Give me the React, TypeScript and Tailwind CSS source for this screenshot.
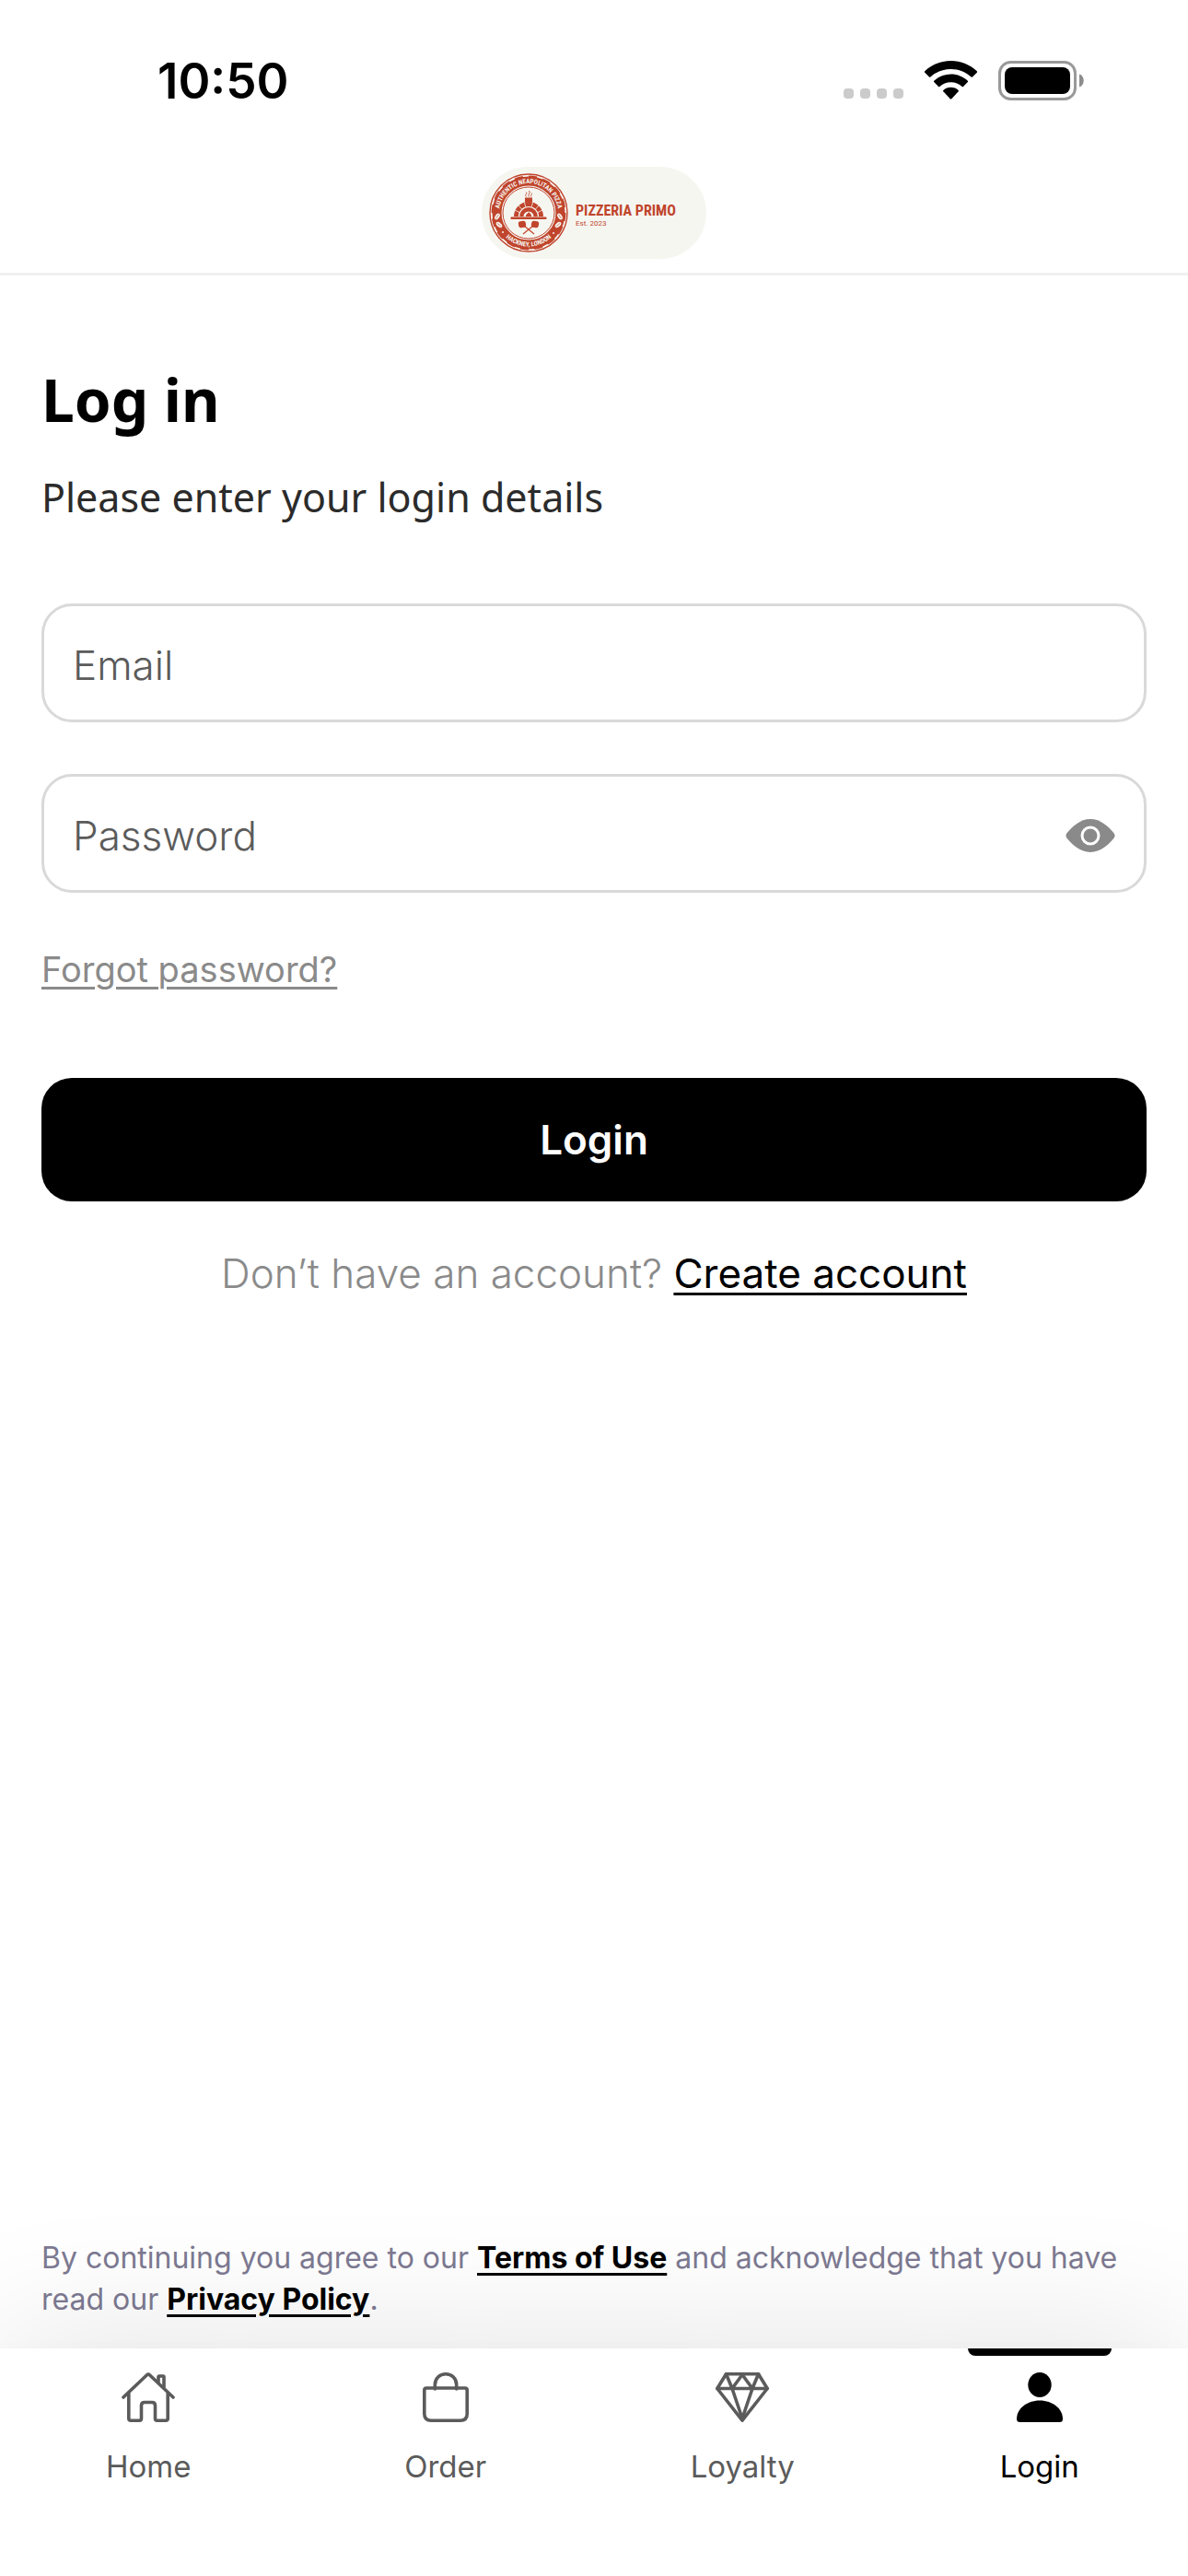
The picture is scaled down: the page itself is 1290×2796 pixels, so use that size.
import { useState } from 'react';
import type { ReactNode } from 'react';

const BRAND = '#c0452c';

function StatusBar() {
  return (
    <div className="flex h-[174px] items-center justify-between pr-[113px] pl-[171px]">
      <time className="pt-[2px] text-[53px] leading-none font-semibold text-black">10:50</time>
      <div className="flex items-end gap-[23px]">
        <div className="flex gap-[7px] pb-[2px]" aria-hidden="true">
          <span className="size-[11px] rounded-[4px] bg-[#cbcbcb]" />
          <span className="size-[11px] rounded-[4px] bg-[#cbcbcb]" />
          <span className="size-[11px] rounded-[4px] bg-[#cbcbcb]" />
          <span className="size-[11px] rounded-[4px] bg-[#cbcbcb]" />
        </div>
        <svg width="57" height="42" viewBox="0 0 57 42" className="mb-px" role="img" aria-label="Wi-Fi">
          <path d="M28.5 0C39.500 0 49.500 4.300 56.800 11.300Q57.400 12 56.800 12.700L52 17.600Q51.300 18.100 50.600 17.600C44.800 12.200 37 8.900 28.500 8.900S12.200 12.200 6.400 17.600Q5.700 18.100 5 17.600L0.200 12.700Q-0.400 12 0.200 11.300C7.500 4.300 17.500 0 28.500 0Z" />
          <path d="M28.500 14.500C35.600 14.500 42 17.200 46.800 21.700Q47.500 22.300 46.800 23L42 27.900Q41.300 28.500 40.600 27.900C37.400 24.900 33.200 23.200 28.500 23.200S19.600 24.900 16.400 27.900Q15.700 28.500 15 27.900L10.200 23Q9.500 22.300 10.200 21.700C15 17.200 21.400 14.500 28.500 14.500Z" />
          <path d="M28.500 28.800C31.600 28.800 34.500 29.900 36.700 31.900Q37.300 32.500 36.700 33.200L29.300 41.200Q28.500 41.900 27.700 41.200L20.300 33.200Q19.700 32.500 20.300 31.900C22.500 29.900 25.400 28.800 28.500 28.800Z" />
        </svg>
        <svg width="93" height="43" viewBox="0 0 93 43" role="img" aria-label="Battery full">
          <rect x="1.500" y="1.500" width="82" height="40" rx="12" fill="none" stroke="#999" strokeWidth="3" />
          <rect x="7" y="7" width="71" height="29" rx="8" />
          <path d="M88 14.500C94.300 16.500 94.300 26.500 88 28.500Z" fill="#8c8c8c" />
        </svg>
      </div>
    </div>
  );
}

function Leaf({ x, y, r }: { x: number; y: number; r: number }) {
  return (
    <g transform={`translate(${x} ${y}) rotate(${r})`}>
      <ellipse rx="2.200" ry="3.800" fill="#f6f6f1" />
      <path d="M0 -2.500V2.500" stroke={BRAND} strokeWidth="0.600" />
    </g>
  );
}

function Logo() {
  return (
    <div className="flex h-[100px] w-[244px] items-center rounded-full bg-[#f6f6f1] pl-2">
      <svg width="86" height="86" viewBox="-43 -43 86 86" aria-hidden="true">
        <defs>
          <path id="seal-top" d="M-32 0A32 32 0 0 1 32 0" />
          <path id="seal-bottom" d="M-36.500 0A36.500 36.500 0 0 0 36.500 0" />
        </defs>
        <circle r="42" fill="none" stroke={BRAND} strokeWidth="1.400" />
        <circle r="34.500" fill="none" stroke={BRAND} strokeWidth="10" />
        <circle r="39" fill="none" stroke={BRAND} strokeWidth="3" strokeDasharray="9 6.300" />
        <circle r="28" fill="none" stroke={BRAND} strokeWidth="1" />
        <text fill="#f6f6f1" fontSize="7" fontWeight="700" textAnchor="middle" className="font-['Roboto_Condensed','Liberation_Sans_Narrow','Roboto',sans-serif]">
          <textPath href="#seal-top" startOffset="50%">AUTHENTIC NEAPOLITAN PIZZA</textPath>
        </text>
        <text fill="#f6f6f1" fontSize="7" fontWeight="700" textAnchor="middle" className="font-['Roboto_Condensed','Liberation_Sans_Narrow','Roboto',sans-serif]">
          <textPath href="#seal-bottom" startOffset="50%">HACKNEY, LONDON</textPath>
        </text>
        <Leaf x={-34} y={4} r={35} />
        <Leaf x={-32} y={13} r={-50} />
        <Leaf x={34} y={4} r={-35} />
        <Leaf x={32} y={13} r={50} />
        <circle cx="-28" cy="21" r="1" fill="#f6f6f1" />
        <circle cx="27" cy="22" r="1" fill="#f6f6f1" />
        <g fill={BRAND}>
          <path d="M-16 4C-16 -5 -9 -12 0 -12S16 -5 16 4Z" />
          <rect x="-19.500" y="4.500" width="39" height="2.400" rx="0.600" />
          <rect x="-4" y="-16.500" width="8" height="5" />
        </g>
        <path d="M-10.500 4A10.500 10.500 0 0 1 10.500 4" fill="none" stroke="#f6f6f1" strokeWidth="1.200" />
        <path d="M-7.500 -4L-11 -8M7.500 -4L11 -8M-3.200 -6.500L-4.500 -11M3.200 -6.500L4.500 -11M-10 -0.500L-15 -3M10 -0.500L15 -3" stroke="#f6f6f1" strokeWidth="0.800" />
        <path d="M-5.500 4A5.500 5.500 0 0 1 5.500 4Z" fill="#f6f6f1" />
        <path d="M-3 4C-3.500 1.500 -0.500 1 0 -1C1.500 0.500 3.500 2 3 4Z" fill={BRAND} />
        <path d="M-2.500 -17.500C-5 -19.500 -1 -20.500 -2.500 -22.500M0.500 -17.500C-1.500 -20 2.500 -21 0.500 -24M3 -17.500C1.500 -19 4.500 -20 3 -21.500" fill="none" stroke={BRAND} strokeWidth="0.900" />
        <path d="M-5 14L6 23M5 14L-6 23" stroke={BRAND} strokeWidth="1.200" />
        <g fill={BRAND}>
          <rect x="-11" y="9" width="8" height="7" rx="2.400" transform="rotate(-10 -7 12.500)" />
          <rect x="3" y="9" width="8" height="7" rx="2.400" transform="rotate(10 7 12.500)" />
        </g>
      </svg>
      <div className="flex flex-col pt-1 pl-2 font-['Roboto_Condensed','Liberation_Sans_Narrow','Roboto',sans-serif] text-[#c0452c]">
        <span className="text-[16px] leading-[18px] font-bold whitespace-nowrap">PIZZERIA PRIMO</span>
        <span className="font-['Roboto',sans-serif] text-[8px] leading-[9px]">Est. 2023</span>
      </div>
    </div>
  );
}

const fieldBox =
  'flex h-[129px] items-center rounded-[33px] border-[3px] border-[#d9d9d9] bg-white pt-1 pr-[31px] pl-[31px]';
const fieldInput =
  'min-w-0 flex-1 bg-transparent text-[44px] font-light text-black outline-none placeholder:text-[#5b5b5b]';

function LoginForm() {
  const [visible, setVisible] = useState(false);
  return (
    <form className="flex flex-col" onSubmit={(e) => e.preventDefault()}>
      <div className={fieldBox}>
        <input className={fieldInput} type="email" aria-label="Email" placeholder="Email" />
      </div>
      <div className={`${fieldBox} mt-14`}>
        <input
          className={fieldInput}
          type={visible ? 'text' : 'password'}
          aria-label="Password"
          placeholder="Password"
        />
        <button type="button" aria-label="Show password" onClick={() => setVisible(!visible)}>
          <svg width="54" height="36" viewBox="0 0 54 36" className="block">
            <path
              d="M27 0C38 0 46.500 8 52.500 15.200Q54.600 18 52.500 20.800C46.500 28 38 36 27 36S7.500 28 1.500 20.800Q-0.600 18 1.500 15.200C7.500 8 16 0 27 0Z"
              fill="#8a8a8a"
            />
            <circle cx="27" cy="18" r="9" fill="none" stroke="#fff" strokeWidth="3" />
          </svg>
        </button>
      </div>
      <a
        href="#forgot"
        className="mt-[59px] self-start text-[38px] leading-[48px] text-[#8a8a8a] underline decoration-[3px] underline-offset-[5px]"
      >
        Forgot password?
      </a>
      <button
        type="submit"
        className="mt-[94px] h-[134px] rounded-[33px] bg-black text-[44px] font-semibold text-white"
      >
        Login
      </button>
    </form>
  );
}

const strokeProps = {
  fill: 'none',
  stroke: 'currentColor',
  strokeWidth: 3.6,
  strokeLinecap: 'round',
  strokeLinejoin: 'round',
} as const;

function HomeIcon() {
  return (
    <svg width="58" height="54" viewBox="0 0 58 54" {...strokeProps}>
      <path d="M2 27L27.300 3Q29 1.400 30.700 3L56 27" />
      <path d="M7.800 23V50Q7.800 52.200 10 52.200H19.500Q21.500 52.200 21.500 50V36Q21.500 32.500 25 32.500H33Q36.500 32.500 36.500 36V50Q36.500 52.200 38.500 52.200H48Q50.200 52.200 50.200 50V23" />
      <path d="M40 11V5Q40 4 41 4H45Q46 4 46 5V16" />
    </svg>
  );
}

function OrderIcon() {
  return (
    <svg width="50" height="54" viewBox="0 0 50 54" {...strokeProps}>
      <path d="M4 17H46Q48.200 17 48.200 19.200V45Q48.200 52.200 41 52.200H9Q1.800 52.200 1.800 45V19.200Q1.800 17 4 17Z" />
      <path d="M13.300 18V13.500C13.300 6.500 18.500 1.800 25 1.800S36.700 6.500 36.700 13.500V18" />
    </svg>
  );
}

function LoyaltyIcon() {
  return (
    <svg width="58" height="54" viewBox="0 0 58 54" {...strokeProps}>
      <path d="M11.500 1.800H46.500L56.200 17.500L29 52.200L1.800 17.500Z" />
      <path d="M1.800 17.500H56.200M11.500 1.800L18 17.500L29 2.500L40 17.500L46.500 1.800M18 17.500L29 50L40 17.500" />
    </svg>
  );
}

function LoginIcon() {
  return (
    <svg width="50" height="54" viewBox="0 0 50 54" fill="currentColor">
      <ellipse cx="25" cy="13.500" rx="12.700" ry="13.500" />
      <path d="M25 30.500C39 30.500 50 39.500 50 50.500Q50 54 46.500 54H3.500Q0 54 0 50.500C0 39.500 11 30.500 25 30.500Z" />
    </svg>
  );
}

function Tab({ label, icon, active = false }: { label: string; icon: ReactNode; active?: boolean }) {
  return (
    <a
      href={`#${label.toLowerCase()}`}
      aria-current={active ? 'page' : undefined}
      className={`flex flex-1 flex-col items-center ${active ? 'text-black' : 'text-[#5b5b5b]'}`}
    >
      <span className={`h-2 w-[156px] rounded-b-[8px] ${active ? 'bg-black' : 'bg-transparent'}`} />
      <span className="mt-[18px] flex h-[54px] items-center">{icon}</span>
      <span className="mt-7 text-[33px] leading-[40px]">{label}</span>
    </a>
  );
}

export default function App() {
  return (
    <div className="flex min-h-screen flex-col overflow-x-hidden bg-white font-['Inter',sans-serif]">
      <header className="border-b-[3px] border-[#f0f0f0]">
        <StatusBar />
        <div className="flex justify-center pt-[7px] pb-[15px]">
          <Logo />
        </div>
      </header>
      <main className="flex flex-1 flex-col px-[45px] pt-[93px]">
        <h1 className="font-['Noto_Sans',sans-serif] text-[64px] leading-[84px] font-bold text-black">Log in</h1>
        <p className="mt-[34px] font-['Noto_Sans',sans-serif] text-[43px] leading-[60px] text-[#2b2b2b]">
          Please enter your login details
        </p>
        <div className="mt-[85px]">
          <LoginForm />
        </div>
        <p className="mt-[52px] text-center text-[44px] leading-[52px] font-light text-[#8a8a8a]">
          Don’t have an account?{' '}
          <a href="#create" className="font-normal text-black underline decoration-[3px] underline-offset-[5px]">
            Create account
          </a>
        </p>
        <p className="mt-auto pb-[31px] text-[32px] leading-[45px] text-[#7d7a92]">
          By continuing you agree to our{' '}
          <a href="#terms" className="font-bold text-black underline decoration-[3px] underline-offset-[5px]">
            Terms of Use
          </a>{' '}
          and acknowledge that you have read our{' '}
          <a href="#privacy" className="font-bold text-black underline decoration-[3px] underline-offset-[5px]">
            Privacy Policy
          </a>
          .
        </p>
      </main>
      <nav className="flex bg-white pb-[99px] shadow-[0_0_160px_rgba(0,0,0,0.13)]">
        <Tab label="Home" icon={<HomeIcon />} />
        <Tab label="Order" icon={<OrderIcon />} />
        <Tab label="Loyalty" icon={<LoyaltyIcon />} />
        <Tab label="Login" icon={<LoginIcon />} active />
      </nav>
    </div>
  );
}
